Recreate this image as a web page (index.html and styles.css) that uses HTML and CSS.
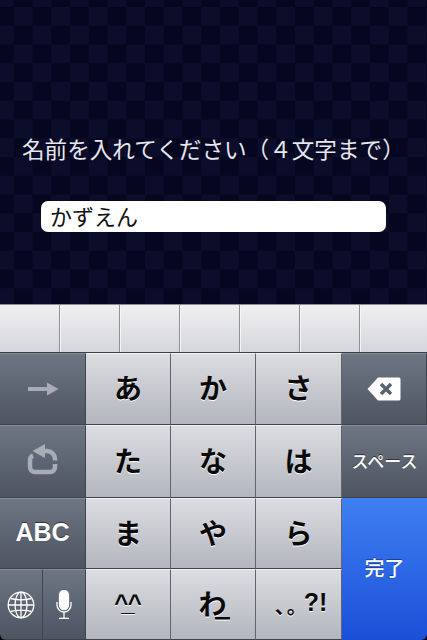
FILE: index.html
```html
<!DOCTYPE html>
<html lang="ja">
<head>
    <meta charset="UTF-8">
    <meta name="viewport" content="width=device-width, initial-scale=1.0">
    <title>名前入力</title>
    <link rel="stylesheet" href="styles.css">
</head>
<body>
    <div class="screen">
        <div class="name-panel">
            <p class="prompt">名前を入れてください（４文字まで）</p>
            <div class="name-input">かずえん</div>
        </div>

        <div class="candidates">
            <div class="cell"></div>
            <div class="cell"></div>
            <div class="cell"></div>
            <div class="cell"></div>
            <div class="cell"></div>
            <div class="cell"></div>
            <div class="cell"></div>
        </div>

        <div class="keyboard">
            <div class="key dark">
                <svg width="32" height="14" viewBox="0 0 32 14"><path d="M1 5h19V0.500L31.500 7 20 13.500V9H1z" fill="#a7acb6"/></svg>
            </div>
            <div class="key kana">あ</div>
            <div class="key kana">か</div>
            <div class="key kana">さ</div>
            <div class="key dark">
                <svg width="34" height="24" viewBox="0 0 34 24">
                    <path d="M11 0.500H32a1.500 1.500 0 0 1 1.500 1.500V22a1.500 1.500 0 0 1-1.500 1.500H11L0.500 12z" fill="#fff"/>
                    <path d="M14 7l10 10M24 7L14 17" stroke="#5b626f" stroke-width="3.500" fill="none"/>
                </svg>
            </div>

            <div class="key dark lifted">
                <svg width="31" height="31" viewBox="0 0 31 31">
                    <path d="M17 7h3a8 8 0 0 1 8 8v1.500M28 20v3a5 5 0 0 1-5 5H8a5 5 0 0 1-5-5v-7a5 5 0 0 1 3-4.500" stroke="#a7acb6" stroke-width="4.500" fill="none"/>
                    <path d="M18 0v14L5.500 7z" fill="#a7acb6"/>
                </svg>
            </div>
            <div class="key kana">た</div>
            <div class="key kana">な</div>
            <div class="key kana">は</div>
            <div class="key dark small-label">スペース</div>

            <div class="key dark abc">ABC</div>
            <div class="key kana">ま</div>
            <div class="key kana">や</div>
            <div class="key kana">ら</div>
            <div class="key done">完了</div>

            <div class="key-split">
                <div class="key dark">
                    <svg width="28" height="28" viewBox="0 0 28 28" fill="none" stroke="#fff" stroke-width="1.300">
                        <circle cx="14" cy="14" r="12.800"/>
                        <ellipse cx="14" cy="14" rx="6" ry="12.800"/>
                        <path d="M14 1.200v25.600M1.200 14h25.600M3.500 7.500c6 1.500 15 1.500 21 0M3.500 20.500c6-1.500 15-1.500 21 0"/>
                    </svg>
                </div>
                <div class="key dark">
                    <svg width="16" height="29" viewBox="0 0 16 29" fill="none" stroke="#fff" stroke-width="1.300">
                        <rect x="3.500" y="0.500" width="9" height="19" rx="4.500" fill="#fff"/>
                        <path d="M1 12v3a7 7 0 0 0 14 0v-3M8 22v6M3 28.300h10"/>
                    </svg>
                </div>
            </div>
            <div class="key kana smile">^_^</div>
            <div class="key kana wa">わ_</div>
            <div class="key kana punct"><span class="marks">、。</span>?!</div>
        </div>
    </div>
</body>
</html>
```

FILE: styles.css
```css
body {
    margin: 0;
    background-color: #000;
    font-family: "Noto Sans CJK JP", "Liberation Sans", sans-serif;
}

.screen {
    width: 427px;
    height: 640px;
    display: flex;
    flex-direction: column;
    overflow: hidden;
    border-radius: 0 0 6px 6px;
}

/* 上の紺色チェック柄 */
.name-panel {
    height: 304px;
    box-sizing: border-box;
    padding-top: 132px;
    background-color: #05061f;
    background-image: conic-gradient(#0c0d2a 25%, #05061f 0 50%, #0c0d2a 0 75%, #05061f 0);
    background-size: 37.5px 37.5px;
    background-position: -5px 7px;
}

.prompt {
    margin: 0 0 36px 22px;
    height: 33px;
    line-height: 33px;
    font-size: 22.6px;
    color: #e6e7ec;
    white-space: nowrap;
}

.name-input {
    width: 345px;
    height: 31px;
    margin-left: 41px;
    box-sizing: border-box;
    padding-left: 9px;
    background-color: #fff;
    border-radius: 7px;
    font-size: 22px;
    line-height: 28px;
    color: #111;
}

.candidates {
    height: 49px;
    display: flex;
    box-sizing: border-box;
    border-top: 1px solid #8b8d93;
    border-bottom: 1px solid #3c3f46;
    background: linear-gradient(#f0f0f2, #d5d6da);
}

.cell {
    width: 60px;
    box-sizing: border-box;
    border-right: 1px solid #8f9095;
    border-left: 1px solid #f5f5f6;
}

.cell:first-child {
    border-left: none;
}

.cell:last-child {
    width: 67px;
    border-right: none;
}

.keyboard {
    flex: 1;
    display: grid;
    grid-template-columns: 86px 85px 85px 86px 85px;
    grid-template-rows: 72px 73px 71px 71px;
}

.key {
    display: flex;
    align-items: center;
    justify-content: center;
    box-sizing: border-box;
    border-bottom: 1px solid #3d424c;
    white-space: nowrap;
}

.kana {
    padding-bottom: 4px;
    border-top: 1px solid #f2f3f5;
    border-right: 1px solid #60646c;
    background: linear-gradient(#dcdde1, #b3b6be);
    font-size: 28px;
    font-weight: 700;
    color: #0a0a0a;
    text-shadow: 0 1px 0 #fff;
}

.dark {
    border-top: 1px solid #868c98;
    border-right: 1px solid #3f444e;
    background: linear-gradient(#6e7583, #4e5561);
    color: #fff;
    text-shadow: 0 -1px 0 #333;
}

.lifted {
    padding-bottom: 4px;
}

.small-label {
    padding-bottom: 3px;
    font-size: 17px;
    font-weight: 500;
    border-right: none;
}

.abc {
    padding-bottom: 2px;
    font-family: "Liberation Sans", sans-serif;
    font-size: 25px;
    font-weight: 700;
}

.done {
    grid-row: span 2;
    padding-bottom: 3px;
    border: none;
    background: linear-gradient(#3f80f2, #1b4fd8);
    color: #fff;
    font-size: 20px;
    font-weight: 500;
    text-shadow: 0 -1px 0 #1c3f9c;
}

.key-split {
    display: grid;
    grid-template-columns: 43px 43px;
}

/* 顔文字は字間を詰めて1つのテキストのまま */
.smile {
    align-items: flex-start;
    padding: 18px 7px 0 0;
    font-family: "Liberation Sans", sans-serif;
    font-size: 24px;
    line-height: 30px;
    letter-spacing: -7px;
}

/* わの下に _ が重なる */
.wa {
    letter-spacing: -12px;
    padding-right: 9px;
}

.punct {
    padding-left: 5px;
    font-family: "Liberation Sans", sans-serif;
    font-size: 25px;
}

.marks {
    font-family: "Noto Sans CJK JP", sans-serif;
    font-size: 20px;
    letter-spacing: -8px;
    text-spacing-trim: space-all;
    margin: 6px 5px 0 0;
}
```
